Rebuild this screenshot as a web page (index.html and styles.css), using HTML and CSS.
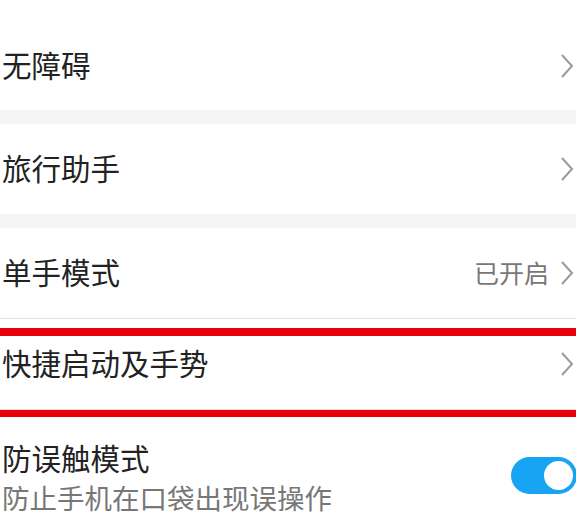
FILE: index.html
```html
<!DOCTYPE html>
<html lang="zh-CN">
<head>
    <meta charset="UTF-8">
    <meta name="viewport" content="width=device-width, initial-scale=1.0">
    <title>辅助功能</title>
    <link rel="stylesheet" href="styles.css">
</head>
<body>
    <div class="settings">
        <div class="item item-first">
            <span class="label">无障碍</span>
            <svg class="chevron" viewBox="0 0 14 24"><path d="M2 1 L12 12 L2 23"/></svg>
        </div>
        <div class="gap"></div>
        <div class="item">
            <span class="label">旅行助手</span>
            <svg class="chevron" viewBox="0 0 14 24"><path d="M2 1 L12 12 L2 23"/></svg>
        </div>
        <div class="gap"></div>
        <div class="item item-line">
            <span class="label">单手模式</span>
            <span class="value">已开启</span>
            <svg class="chevron" viewBox="0 0 14 24"><path d="M2 1 L12 12 L2 23"/></svg>
        </div>
        <div class="item item-line item-marked">
            <span class="label">快捷启动及手势</span>
            <svg class="chevron" viewBox="0 0 14 24"><path d="M2 1 L12 12 L2 23"/></svg>
            <div class="mark"></div>
        </div>
        <div class="item item-switch">
            <div class="text">
                <div class="label">防误触模式</div>
                <div class="desc">防止手机在口袋出现误操作</div>
            </div>
            <div class="switch on"><span class="knob"></span></div>
        </div>
    </div>
</body>
</html>
```

FILE: styles.css
```css
body {
    margin: 0;
    background: #fff;
    font-family: "Noto Sans CJK SC", "Noto Sans", sans-serif;
    color: #222;
    overflow: hidden;
}
.settings {
    width: 576px;
}
.gap {
    height: 14px;
    background: #f5f5f5;
}
.item {
    box-sizing: border-box;
    display: flex;
    align-items: center;
    height: 90px;
    padding: 0 2px 0 2px;
    background: #fff;
}
.item-first {
    height: 110px;
    padding-top: 22px;
}
.item-line {
    height: 91px;
    border-bottom: 1px solid #e2e2e2;
}
.label {
    flex: 1;
    font-size: 29.5px;
    line-height: 38px;
    margin-bottom: 4px;
}
.value {
    font-size: 25px;
    color: #777;
    margin-right: 11px;
    margin-bottom: 3px;
}
.chevron {
    width: 14px;
    height: 24px;
    fill: none;
    stroke: #9a9a9a;
    stroke-width: 2;
}
.item-marked {
    position: relative;
}
.mark {
    position: absolute;
    left: -10px;
    right: -10px;
    top: 9px;
    bottom: -8px;
    border-top: 8px solid #e8000b;
    border-bottom: 7px solid #e8000b;
}
.item-switch {
    align-items: flex-start;
    height: auto;
    padding-top: 28px;
    border-bottom: none;
}
.item-switch .label {
    margin-bottom: 0;
}
.text {
    flex: 1;
}
.desc {
    font-size: 27.5px;
    line-height: 36px;
    margin-top: 3px;
    color: #777;
}
.switch {
    position: relative;
    width: 66px;
    height: 37px;
    margin-top: 19px;
    margin-right: -3px;
    border-radius: 19px;
    background: #c8c8c8;
}
.switch.on {
    background: #17a4f2;
}
.knob {
    position: absolute;
    top: 4px;
    right: 4px;
    width: 29px;
    height: 29px;
    border-radius: 50%;
    background: #fff;
}
```
